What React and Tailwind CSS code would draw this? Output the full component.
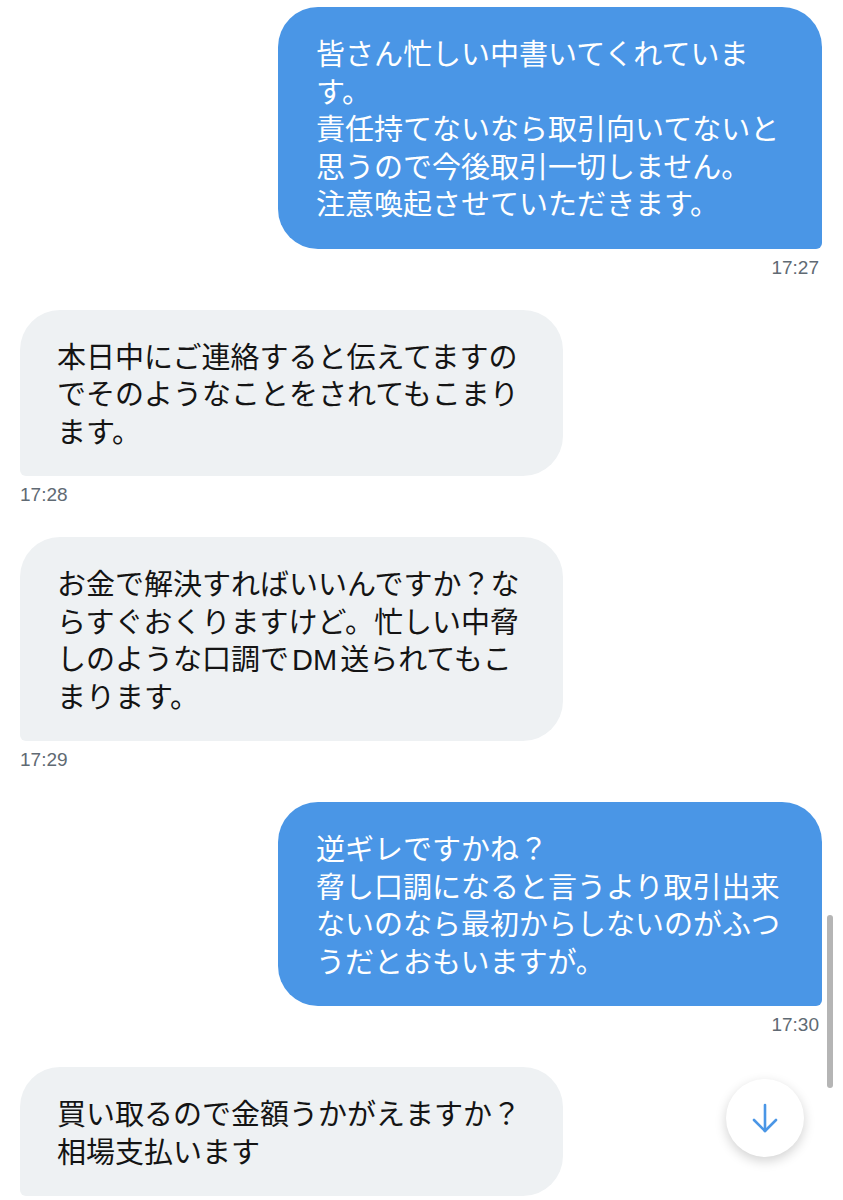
import React from "react";

const jp = { fontFamily: '"Noto Sans CJK JP", "Noto Sans", sans-serif' };

function Bubble({ side, lines, time }) {
  const sent = side === "sent";
  return (
    <div className={sent ? "flex flex-col items-end" : "flex flex-col items-start"}>
      <div
        style={jp}
        className={
          sent
            ? "w-[544px] bg-[#4a96e6] text-white rounded-[40px] rounded-br-[6px] px-[38px] py-[27px] text-[29px] leading-[37.5px]"
            : "w-[543px] bg-[#eef1f3] text-[#141414] rounded-[40px] rounded-bl-[6px] px-[37px] py-[27px] text-[29px] leading-[37.5px]"
        }
      >
        {lines.map((l, i) => (
          <div key={i} className="whitespace-nowrap h-[37.5px]">{l}</div>
        ))}
      </div>
      {time && (
        <div
          className={
            sent
              ? "mt-[8px] mr-[3px] h-[22px] leading-[22px] text-[19px] text-[#606a73]"
              : "mt-[8px] h-[22px] leading-[22px] text-[19px] text-[#606a73]"
          }
          style={{ fontFamily: '"Liberation Sans", Arial, sans-serif' }}
        >
          {time}
        </div>
      )}
    </div>
  );
}

const DM = (
  <span className="mx-[3px] leading-[20px]" style={{ fontFamily: '"Liberation Sans", Arial, sans-serif' }}>
    DM
  </span>
);

export default function App() {
  return (
    <div className="relative w-[843px] h-[1200px] overflow-hidden bg-white">
      <div className="flex flex-col gap-[31px] pt-[7px] pl-[20px] pr-[21px]">
        <Bubble
          side="sent"
          time="17:27"
          lines={[
            "皆さん忙しい中書いてくれていま",
            "す。",
            "責任持てないなら取引向いてないと",
            "思うので今後取引一切しません。",
            "注意喚起させていただきます。",
          ]}
        />
        <Bubble
          side="recv"
          time="17:28"
          lines={[
            "本日中にご連絡すると伝えてますの",
            "でそのようなことをされてもこまり",
            "ます。",
          ]}
        />
        <Bubble
          side="recv"
          time="17:29"
          lines={[
            "お金で解決すればいいんですか？な",
            "らすぐおくりますけど。忙しい中脅",
            <>しのような口調で{DM}送られてもこ</>,
            "まります。",
          ]}
        />
        <Bubble
          side="sent"
          time="17:30"
          lines={[
            "逆ギレですかね？",
            "脅し口調になると言うより取引出来",
            "ないのなら最初からしないのがふつ",
            "うだとおもいますが。",
          ]}
        />
        <Bubble
          side="recv"
          lines={["買い取るので金額うかがえますか？", "相場支払います"]}
        />
      </div>

      {/* scrollbar */}
      <div className="absolute left-[827px] top-[915px] w-[6px] h-[173px] rounded-full bg-[#b5b5b5]" />

      {/* scroll-down button */}
      <div className="absolute left-[726px] top-[1079px] w-[78px] h-[78px] rounded-full bg-white shadow-[0_4px_12px_rgba(0,0,0,0.18)] flex items-center justify-center">
        <svg width="30" height="32" viewBox="0 0 30 32" fill="none" stroke="#4a96e6" strokeWidth="2.6" strokeLinecap="round" strokeLinejoin="round">
          <path d="M15 3 V29" />
          <path d="M4 18 L15 29 L26 18" />
        </svg>
      </div>
    </div>
  );
}
